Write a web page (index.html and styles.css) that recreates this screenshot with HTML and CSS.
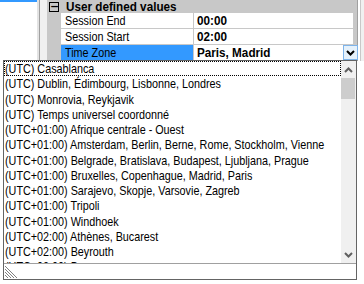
FILE: index.html
```html
<!DOCTYPE html>
<html>
<head>
  <meta charset="UTF-8">
  <title>Time Zone</title>
  <link rel="stylesheet" href="styles.css">
</head>
<body>
  <div class="top">
    <div class="leftPanel"><div class="leftBar"></div></div>
    <div class="splitter"></div>
    <div class="grid">
      <div class="catRow">
        <div class="margin"><span class="minus">−</span></div>
        <div class="catName"><span class="cond b">User defined values</span></div>
      </div>
      <div class="row">
        <div class="margin"></div>
        <div class="name"><span class="cond">Session End</span></div>
        <div class="value"><span class="cond b">00:00</span></div>
      </div>
      <div class="row">
        <div class="margin"></div>
        <div class="name"><span class="cond">Session Start</span></div>
        <div class="value"><span class="cond b">02:00</span></div>
      </div>
      <div class="row">
        <div class="margin"></div>
        <div class="name selected"><span class="cond">Time Zone</span></div>
        <div class="value"><span class="cond b">Paris, Madrid</span>
          <span class="dropBtn">
            <svg width="9" height="6" viewBox="0 0 9 6"><path d="M1 1 L4.5 4.5 L8 1" fill="none" stroke="#000" stroke-width="2"/></svg>
          </span>
        </div>
      </div>
    </div>
    <div class="rightStrip"></div>
  </div>
  <div class="below"></div>

  <div class="dropdown">
    <div class="listWrap">
      <div class="list">
        <div class="item focus"><span class="cond">(UTC) Casablanca</span></div>
        <div class="item"><span class="cond">(UTC) Dublin, Édimbourg, Lisbonne, Londres</span></div>
        <div class="item"><span class="cond">(UTC) Monrovia, Reykjavik</span></div>
        <div class="item"><span class="cond">(UTC) Temps universel coordonné</span></div>
        <div class="item"><span class="cond">(UTC+01:00) Afrique centrale - Ouest</span></div>
        <div class="item"><span class="cond">(UTC+01:00) Amsterdam, Berlin, Berne, Rome, Stockholm, Vienne</span></div>
        <div class="item"><span class="cond">(UTC+01:00) Belgrade, Bratislava, Budapest, Ljubljana, Prague</span></div>
        <div class="item"><span class="cond">(UTC+01:00) Bruxelles, Copenhague, Madrid, Paris</span></div>
        <div class="item"><span class="cond">(UTC+01:00) Sarajevo, Skopje, Varsovie, Zagreb</span></div>
        <div class="item"><span class="cond">(UTC+01:00) Tripoli</span></div>
        <div class="item"><span class="cond">(UTC+01:00) Windhoek</span></div>
        <div class="item"><span class="cond">(UTC+02:00) Athènes, Bucarest</span></div>
        <div class="item"><span class="cond">(UTC+02:00) Beyrouth</span></div>
        <div class="item"><span class="cond">(UTC+02:00) Damas</span></div>
      </div>
      <div class="scrollbar">
        <div class="arrow">
          <svg width="9" height="6" viewBox="0 0 9 6"><path d="M1 5 L4.5 1.5 L8 5" fill="none" stroke="#606060" stroke-width="2"/></svg>
        </div>
        <div class="thumb"></div>
        <div class="track"></div>
        <div class="arrow">
          <svg width="9" height="6" viewBox="0 0 9 6"><path d="M1 1 L4.5 4.5 L8 1" fill="none" stroke="#606060" stroke-width="2"/></svg>
        </div>
      </div>
    </div>
    <div class="gripBar">
      <svg width="12" height="12" viewBox="0 0 12 12">
        <path d="M0 3 L9 12 M0 6 L6 12 M0 9 L3 12 M0 0 L12 12" stroke="#808080" stroke-width="1"/>
      </svg>
    </div>
  </div>
</body>
</html>
```
FILE: styles.css
```css
body { margin: 0; background: #fff; font-family: "Liberation Sans", Arial, sans-serif; font-size: 13px; color: #000; position: relative; width: 364px; height: 284px; overflow: hidden; }

/* narrow look of the original font */
.cond { display: inline-block; white-space: nowrap; transform: scaleX(0.83); transform-origin: 0 50%; }
.cond.b { font-weight: bold; transform: scaleX(0.9); }

.top { display: flex; height: 61px; }
.leftPanel { width: 37px; background: #fff; }
.leftBar { height: 2px; background: #3399ff; }
.splitter { width: 10px; background: #f0f0f0; border-left: 2px solid #e3e3e3; box-sizing: border-box; box-shadow: inset 1px 0 0 #a0a0a0; }
.grid { width: 310px; background: #c8c8c8; display: flex; flex-direction: column; }
.rightStrip { flex: 1; background: #f0f0f0; border-left: 1px solid #a0a0a0; box-shadow: inset 2px 0 0 #fff, inset 3px 0 0 #c8c8c8; }

.catRow { display: flex; height: 13px; align-items: center; }
.margin { width: 14px; flex: none; display: flex; justify-content: center; }
.minus { width: 8px; height: 8px; border: 1px solid #000; font-size: 11px; line-height: 7px; text-align: center; font-weight: bold; font-family: "DejaVu Sans", sans-serif; }
.catName { padding-left: 5px; line-height: 13px; }

.row { display: flex; height: 16px; }
.name { width: 132px; background: #fff; margin-bottom: 1px; padding-left: 4px; line-height: 15px; box-sizing: border-box; overflow: hidden; }
.name.selected { background: #3399ff; }
.value { width: 156px; margin-left: 1px; margin-bottom: 1px; background: #fff; padding-left: 3px; line-height: 15px; position: relative; }
.dropBtn { position: absolute; right: -5px; top: 0; width: 13px; height: 13px; border: 1px solid #7eb4ea; background: #e5f1fb; display: flex; align-items: center; justify-content: center; }

.below { height: 223px; background: #fff; }

.dropdown { position: absolute; left: 3px; top: 60px; width: 354px; height: 220px; box-sizing: border-box; border: 1px solid #646464; background: #fff; display: flex; flex-direction: column; }
.listWrap { display: flex; height: 202px; border-bottom: 1px solid #a0a0a0; }
.list { flex: 1; overflow: hidden; }
.item { height: 15.25px; line-height: 15px; padding-left: 1px; white-space: nowrap; box-sizing: border-box; }
.item.focus { outline: 1px dotted #000; outline-offset: -1px; }
.scrollbar { width: 15px; background: #f0f0f0; display: flex; flex-direction: column; }
.arrow { height: 17px; display: flex; align-items: center; justify-content: center; }
.thumb { height: 21px; background: #cdcdcd; margin-right: 1px; }
.track { flex: 1; }
.gripBar { flex: 1; display: flex; align-items: flex-end; padding: 0 0 1px 1px; }
```
